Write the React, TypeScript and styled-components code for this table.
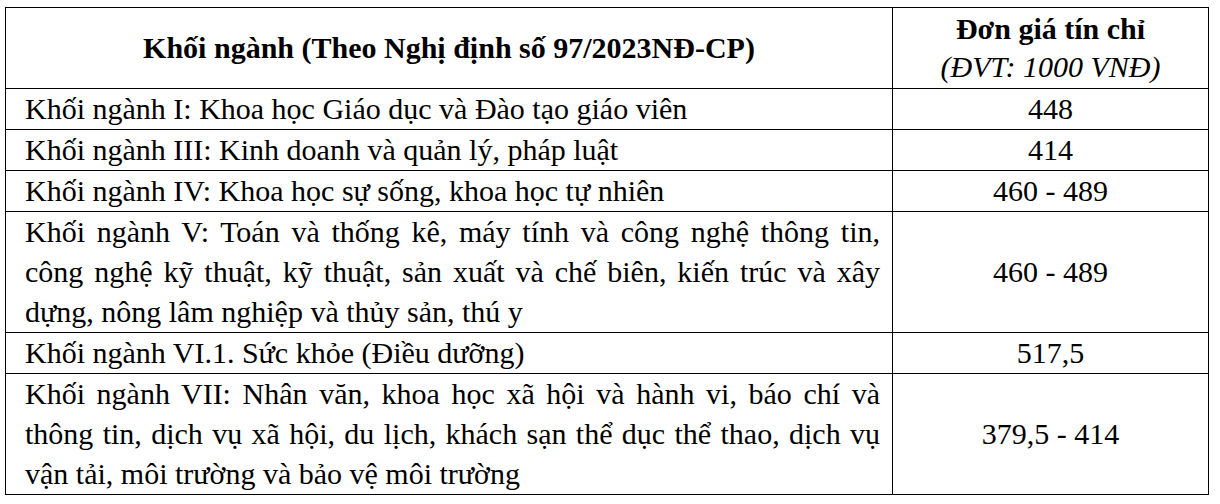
import styled, { createGlobalStyle } from 'styled-components'

const GlobalStyle = createGlobalStyle`
  html, body {
    margin: 0;
    padding: 0;
    background: #fff;
  }
  body {
    font-family: serif;
  }
`

interface RowData {
  name: string
  price: string
}

const rows: RowData[] = [
  { name: 'Khối ngành I: Khoa học Giáo dục và Đào tạo giáo viên', price: '448' },
  { name: 'Khối ngành III: Kinh doanh và quản lý, pháp luật', price: '414' },
  { name: 'Khối ngành IV: Khoa học sự sống, khoa học tự nhiên', price: '460 - 489' },
  {
    name: 'Khối ngành V: Toán và thống kê, máy tính và công nghệ thông tin, công nghệ kỹ thuật, kỹ thuật, sản xuất và chế biên, kiến trúc và xây dựng, nông lâm nghiệp và thủy sản, thú y',
    price: '460 - 489',
  },
  { name: 'Khối ngành VI.1. Sức khỏe (Điều dưỡng)', price: '517,5' },
  {
    name: 'Khối ngành VII: Nhân văn, khoa học xã hội và hành vi, báo chí và thông tin, dịch vụ xã hội, du lịch, khách sạn thể dục thể thao, dịch vụ vận tải, môi trường và bảo vệ môi trường',
    price: '379,5 - 414',
  },
]

export default function App() {
  return (
    <>
      <GlobalStyle />
      <Page lang="vi">
        <Grid>
          <HeadCell>Khối ngành (Theo Nghị định số 97/2023NĐ-CP)</HeadCell>
          <HeadCell>
            <span>Đơn giá tín chỉ</span>
            <Unit>(ĐVT: 1000 VNĐ)</Unit>
          </HeadCell>
          {rows.map((r) => (
            <Row key={r.name}>
              <NameCell>{r.name}</NameCell>
              <PriceCell>{r.price}</PriceCell>
            </Row>
          ))}
        </Grid>
      </Page>
    </>
  )
}

const Page = styled.div`
  padding: 7px 0 0 5px;
  font-family: Tinos, 'Liberation Serif', serif;
  color: #000;
`

const Grid = styled.div`
  display: grid;
  grid-template-columns: 887px 316px;
  width: max-content;
  border-top: 1.5px solid #000;
  border-left: 1.5px solid #000;
  font-size: 30px;
  line-height: 40px;
`

const Row = styled.div`
  display: contents;
`

const Cell = styled.div`
  border-right: 1.5px solid #000;
  border-bottom: 1.5px solid #000;
`

const HeadCell = styled(Cell)`
  height: 80px;
  padding: 0 8px;
  display: flex;
  flex-direction: column;
  align-items: center;
  justify-content: center;
  font-weight: bold;
  text-align: center;
  line-height: 38px;
`

const Unit = styled.span`
  font-weight: normal;
  font-style: italic;
`

const NameCell = styled(Cell)`
  padding: 0 12px 0 19px;
  text-align: justify;
`

const PriceCell = styled(Cell)`
  padding: 0 8px;
  display: flex;
  align-items: center;
  justify-content: center;
`
